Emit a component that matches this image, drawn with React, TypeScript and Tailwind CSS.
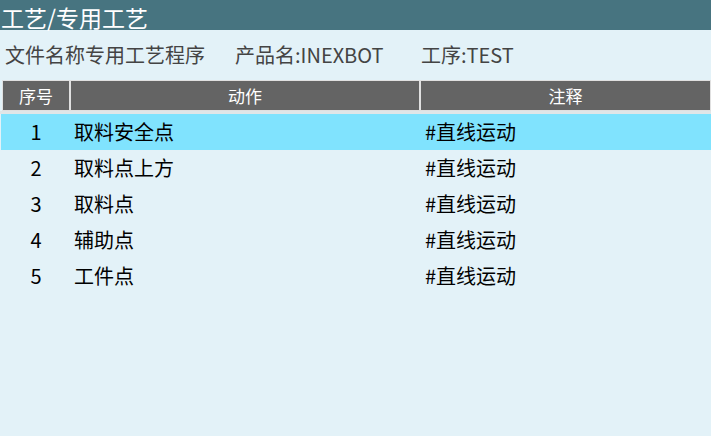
const rows = [
  { no: 1, action: "取料安全点", note: "#直线运动" },
  { no: 2, action: "取料点上方", note: "#直线运动" },
  { no: 3, action: "取料点", note: "#直线运动" },
  { no: 4, action: "辅助点", note: "#直线运动" },
  { no: 5, action: "工件点", note: "#直线运动" },
];

export default function App() {
  return (
    <div className="w-[711px] h-[436px] bg-[#e3f2f8] overflow-hidden font-['Noto_Sans_CJK_SC','Noto_Sans',sans-serif]">
      <div className="h-[30px] bg-[#477480] text-white text-[23px] leading-[34px] pl-[1px]">工艺/专用工艺</div>

      <div className="h-[50px] flex items-center text-[20px] text-[#444] pl-[5px]">
        <span className="w-[230px]">文件名称专用工艺程序</span>
        <span className="w-[186px]">产品名:INEXBOT</span>
        <span>工序:TEST</span>
      </div>

      <div className="ml-[2px] flex h-[31px] bg-[#e0e0e0] p-[1px] gap-[2px] text-white text-[17px] leading-[29px]">
        <div className="w-[66px] bg-[#646464] text-center">序号</div>
        <div className="w-[348px] bg-[#646464] text-center">动作</div>
        <div className="flex-1 bg-[#646464] text-center">注释</div>
      </div>
      <div className="h-[3px] bg-[#e0e6e8]" />

      <div className="text-[20px] text-black">
        {rows.map((r) => (
          <div
            key={r.no}
            className={`flex h-[36px] items-center ml-[1px] ${r.no === 1 ? "bg-[#80e3fe]" : ""}`}
          >
            <div className="w-[70px] text-center">{r.no}</div>
            <div className="w-[354px] pl-[3px]">{r.action}</div>
            <div className="flex-1">{r.note}</div>
          </div>
        ))}
      </div>
    </div>
  );
}
